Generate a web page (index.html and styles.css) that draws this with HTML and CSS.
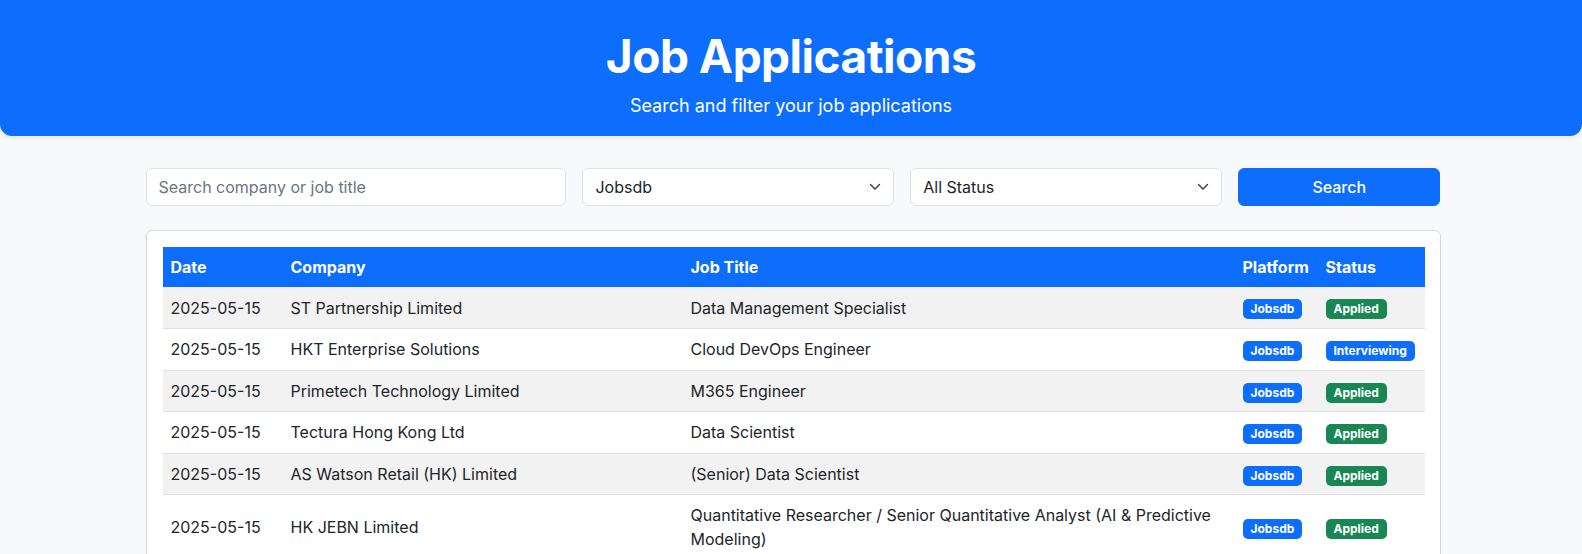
FILE: index.html
```html
<!DOCTYPE html>
<html lang="en">
<head>
<meta charset="utf-8">
<title>Job Applications</title>
<link rel="stylesheet" href="styles.css">
</head>
<body>
<header class="hero">
  <h1 class="hero-title">Job Applications</h1>
  <p class="hero-sub">Search and filter your job applications</p>
</header>
<main class="container">
  <form class="filters">
    <div class="col col-4">
      <input class="field" type="text" placeholder="Search company or job title">
    </div>
    <div class="col col-3">
      <div class="select-wrap">
        <select class="field field-select"><option>Jobsdb</option></select>
        <svg class="chevron" width="12" height="8" viewBox="0 0 12 8"><path d="M1.5 1.5 6 6l4.5-4.5" fill="none" stroke="#343a40" stroke-width="1.4" stroke-linecap="round" stroke-linejoin="round"/></svg>
      </div>
    </div>
    <div class="col col-3">
      <div class="select-wrap">
        <select class="field field-select"><option>All Status</option></select>
        <svg class="chevron" width="12" height="8" viewBox="0 0 12 8"><path d="M1.5 1.5 6 6l4.5-4.5" fill="none" stroke="#343a40" stroke-width="1.4" stroke-linecap="round" stroke-linejoin="round"/></svg>
      </div>
    </div>
    <div class="col col-2">
      <button class="btn" type="button">Search</button>
    </div>
  </form>
  <section class="card">
    <table class="jobs">
      <colgroup>
        <col class="c-date"><col class="c-company"><col class="c-title"><col class="c-platform"><col class="c-status">
      </colgroup>
      <thead>
        <tr><th>Date</th><th>Company</th><th>Job Title</th><th>Platform</th><th>Status</th></tr>
      </thead>
      <tbody>
        <tr><td>2025-05-15</td><td>ST Partnership Limited</td><td>Data Management Specialist</td><td><span class="badge blue">Jobsdb</span></td><td><span class="badge green">Applied</span></td></tr>
        <tr><td>2025-05-15</td><td>HKT Enterprise Solutions</td><td>Cloud DevOps Engineer</td><td><span class="badge blue">Jobsdb</span></td><td><span class="badge blue">Interviewing</span></td></tr>
        <tr><td>2025-05-15</td><td>Primetech Technology Limited</td><td>M365 Engineer</td><td><span class="badge blue">Jobsdb</span></td><td><span class="badge green">Applied</span></td></tr>
        <tr><td>2025-05-15</td><td>Tectura Hong Kong Ltd</td><td>Data Scientist</td><td><span class="badge blue">Jobsdb</span></td><td><span class="badge green">Applied</span></td></tr>
        <tr><td>2025-05-15</td><td>AS Watson Retail (HK) Limited</td><td>(Senior) Data Scientist</td><td><span class="badge blue">Jobsdb</span></td><td><span class="badge green">Applied</span></td></tr>
        <tr><td>2025-05-15</td><td>HK JEBN Limited</td><td>Quantitative Researcher / Senior Quantitative Analyst (AI &amp; Predictive Modeling)</td><td><span class="badge blue">Jobsdb</span></td><td><span class="badge green">Applied</span></td></tr>
      </tbody>
    </table>
  </section>
</main>
</body>
</html>
```

FILE: styles.css
```css
* { box-sizing: border-box; }

html, body {
  margin: 0;
  padding: 0;
}

body {
  background: #f8f9fa;
  color: #212529;
  font-family: Inter, "Noto Sans", "Liberation Sans", sans-serif;
  font-size: 16px;
  line-height: 1.5;
}

.hero {
  background: #0d6efd;
  color: #fff;
  text-align: center;
  padding: 29px 16px 17px;
  border-radius: 0 0 12px 12px;
  box-shadow: 0 2px 6px rgba(0, 0, 0, 0.08);
}

.hero-title {
  margin: 0;
  font-size: 46px;
  font-weight: 700;
  line-height: 1.2;
  letter-spacing: -0.5px;
}

.hero-sub {
  margin: 7.5px 0 0;
  font-size: 18px;
  line-height: 1.5;
}

.container {
  max-width: 1299px;
  margin: 0 auto;
  padding: 32.5px 0 0 4px;
}

.filters {
  display: flex;
  margin: 0 -8px 24px;
}

.col { padding: 0 8px; }
.col-4 { width: 33.3333%; }
.col-3 { width: 25%; }
.col-2 { width: 16.6667%; }

.field {
  display: block;
  width: 100%;
  height: 38px;
  padding: 6px 12px;
  font: inherit;
  font-size: 16px;
  line-height: 24px;
  color: #212529;
  background: #fff;
  border: 1px solid #dee2e6;
  border-radius: 6px;
  outline: none;
}

.field::placeholder { color: #6c757d; }

.select-wrap { position: relative; }

.field-select {
  appearance: none;
  -webkit-appearance: none;
  padding-right: 36px;
}

.chevron {
  position: absolute;
  right: 13px;
  top: 15px;
  pointer-events: none;
}

.btn {
  display: block;
  width: 100%;
  height: 38px;
  font: inherit;
  font-size: 16px;
  font-weight: 500;
  color: #fff;
  background: #0d6efd;
  border: 1px solid #0d6efd;
  border-radius: 6px;
}

.card {
  background: #fff;
  border: 1px solid #d7dadd;
  border-radius: 6px;
  padding: 16px;
  box-shadow: 0 1px 2px rgba(0, 0, 0, 0.05);
}

.jobs {
  width: 100%;
  border-collapse: collapse;
  table-layout: fixed;
}

.c-date { width: 120px; }
.c-company { width: 400px; }
.c-title { width: 552px; }
.c-platform { width: 83px; }
.c-status { width: 107px; }

.jobs th {
  background: #0d6efd;
  color: #fff;
  font-weight: 700;
  text-align: left;
  padding: 8px;
  height: 40px;
}

.jobs td {
  padding: 8px;
  vertical-align: middle;
  border-bottom: 1px solid #dee2e6;
  height: 41.5px;
}

.jobs tbody tr:nth-child(odd) td { background: #f2f2f2; }

.badge {
  display: inline-block;
  padding: 4px 8px;
  font-size: 12px;
  font-weight: 700;
  line-height: 12px;
  color: #fff;
  border-radius: 5px;
  white-space: nowrap;
  vertical-align: middle;
}

.badge.blue { background: #0d6efd; }
.badge.green { background: #198754; }
```
